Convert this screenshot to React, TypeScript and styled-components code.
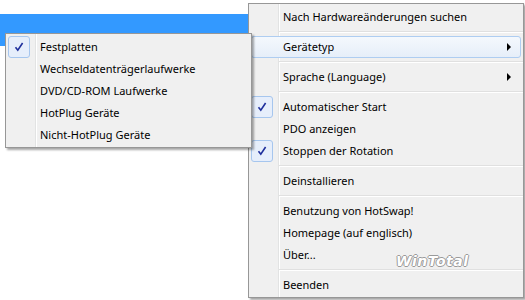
import styled, { createGlobalStyle } from 'styled-components'

const GlobalStyle = createGlobalStyle`
  html, body {
    margin: 0;
    padding: 0;
    background: #ffffff;
  }
  body {
    font-family: 'Noto Sans', 'Open Sans', sans-serif;
    font-size: 11px;
    color: #000000;
  }
`

const Desktop = styled.div`
  position: relative;
  width: 525px;
  height: 300px;
  overflow: hidden;
  background: #ffffff;
`

const SelectionBar = styled.div`
  margin-top: 14px;
  width: 250px;
  height: 32px;
  background: #3399ff;
`

/**
 * Win7 style menu panel, the gutter line is drawn by the background
 */
const Menu = styled.div<{ $left: number; $top: number; $width: number }>`
  position: absolute;
  left: ${(p) => p.$left}px;
  top: ${(p) => p.$top}px;
  width: ${(p) => p.$width}px;
  box-sizing: border-box;
  padding: 2px 0 1px;
  border: 1px solid #979797;
  background:
    linear-gradient(
      to right,
      transparent 29px,
      #e2e3e3 29px,
      #e2e3e3 30px,
      #ffffff 30px,
      #ffffff 31px,
      transparent 31px
    ),
    #f0f0f0;
  box-shadow: 2px 2px 2px rgba(0, 0, 0, 0.35);
  display: flex;
  flex-direction: column;
`

const Item = styled.div<{ $hot?: boolean }>`
  position: relative;
  display: flex;
  align-items: center;
  height: 22px;
  margin: 0 2px;
  box-sizing: border-box;
  border: 1px solid ${(p) => (p.$hot ? '#aecdf1' : 'transparent')};
  border-radius: 3px;
  background: ${(p) => (p.$hot ? 'linear-gradient(#f4f8fd, #e6eef9)' : 'transparent')};
`

const CheckSlot = styled.div`
  width: 22px;
  height: 22px;
  margin-left: -1px;
  box-sizing: border-box;
  display: flex;
  align-items: center;
  justify-content: center;
`

const CheckBox = styled(CheckSlot)`
  border: 1px solid #a6c6ee;
  border-radius: 3px;
  background: #e6eefb;
`

const Label = styled.span`
  flex: 1;
  margin-left: 10px;
  white-space: nowrap;
  line-height: 20px;
`

const Arrow = styled.span`
  width: 0;
  height: 0;
  margin-right: 9px;
  border-top: 4px solid transparent;
  border-bottom: 4px solid transparent;
  border-left: 4px solid #000000;
`

const Separator = styled.div`
  height: 8px;
  margin-left: 30px;
  display: flex;
  flex-direction: column;
  justify-content: center;
  &::before {
    content: '';
    height: 1px;
    background: #e0e0e0;
  }
  &::after {
    content: '';
    height: 1px;
    background: #ffffff;
  }
`

const Watermark = styled.span`
  position: absolute;
  left: 147px;
  top: 249px;
  font-family: 'DejaVu Sans', sans-serif;
  font-size: 14px;
  font-weight: bold;
  font-style: italic;
  letter-spacing: 0.5px;
  color: #ffffff;
  text-shadow:
    1px 0 0 #9a9a9a,
    -1px 0 0 #9a9a9a,
    0 1px 0 #9a9a9a,
    0 -1px 0 #9a9a9a;
  pointer-events: none;
`

function Check() {
  return (
    <CheckBox>
      <svg width="10" height="10" viewBox="0 0 10 10">
        <path d="M1.5 5.2 L3.8 8.2 L8.6 1" fill="none" stroke="#1f2f9c" strokeWidth="1.6" />
      </svg>
    </CheckBox>
  )
}

interface IEntry {
  label: string
  checked?: boolean
  sub?: boolean
  hot?: boolean
}

function Entry({ label, checked, sub, hot }: IEntry) {
  return (
    <Item $hot={hot}>
      {checked ? <Check /> : <CheckSlot />}
      <Label>{label}</Label>
      {sub && <Arrow />}
    </Item>
  )
}

function App() {
  return (
    <>
      <GlobalStyle />
      <Desktop>
        <SelectionBar />
        <Menu $left={248} $top={3} $width={276}>
          <Entry label="Nach Hardwareänderungen suchen" />
          <Separator />
          <Entry label="Gerätetyp" sub hot />
          <Separator />
          <Entry label="Sprache (Language)" sub />
          <Separator />
          <Entry label="Automatischer Start" checked />
          <Entry label="PDO anzeigen" />
          <Entry label="Stoppen der Rotation" checked />
          <Separator />
          <Entry label="Deinstallieren" />
          <Separator />
          <Entry label="Benutzung von HotSwap!" />
          <Entry label="Homepage (auf englisch)" />
          <Entry label="Über..." />
          <Separator />
          <Entry label="Beenden" />
          <Watermark>WinTotal</Watermark>
        </Menu>
        <Menu $left={5} $top={33} $width={247}>
          <Entry label="Festplatten" checked />
          <Entry label="Wechseldatenträgerlaufwerke" />
          <Entry label="DVD/CD-ROM Laufwerke" />
          <Entry label="HotPlug Geräte" />
          <Entry label="Nicht-HotPlug Geräte" />
        </Menu>
      </Desktop>
    </>
  )
}

export default App
